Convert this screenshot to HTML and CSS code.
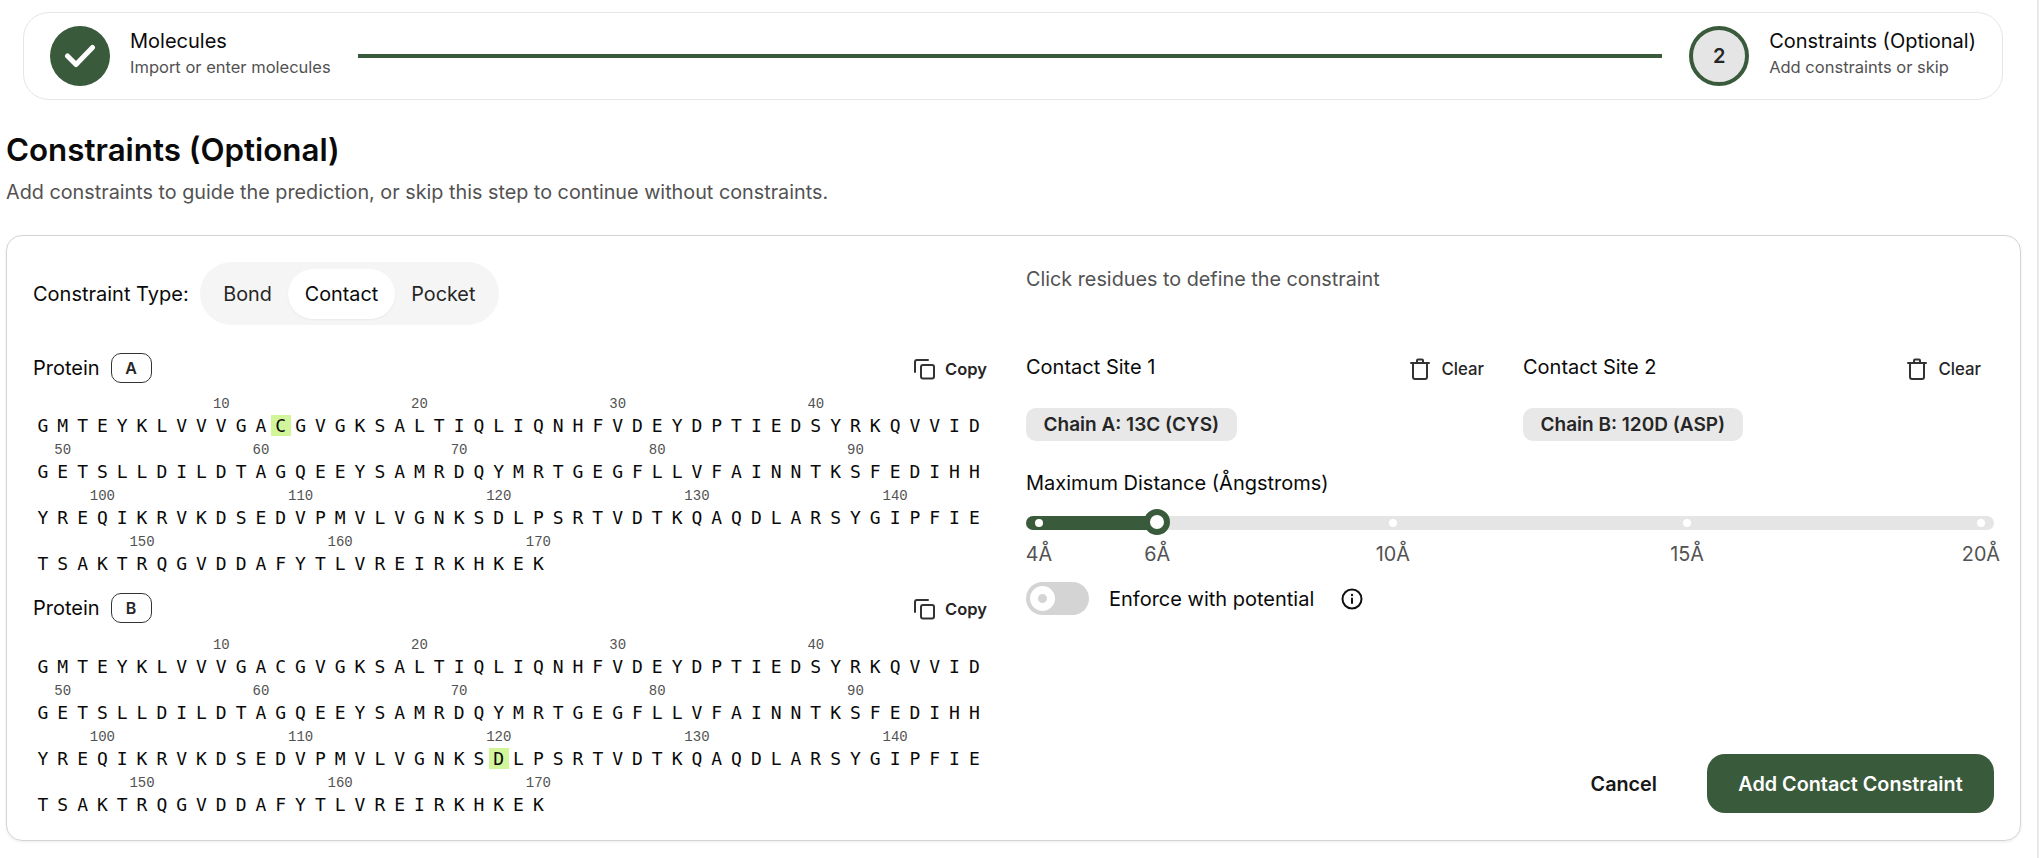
FILE: index.html
```html
<!DOCTYPE html>
<html lang="en">
<head>
  <meta charset="UTF-8">
  <title>Constraints (Optional)</title>
  <link rel="stylesheet" href="styles.css">
</head>
<body>
  <div class="page">
    <div class="stepper">
      <div class="step">
        <div class="step-circle done">
          <svg width="32" height="32" viewBox="0 0 32 32" fill="none" stroke="#fff" stroke-width="5" stroke-linecap="round" stroke-linejoin="round"><path d="M3.500 16L12 24.500L28.500 7.500"/></svg>
        </div>
        <div class="step-text">
          <div class="step-title">Molecules</div>
          <div class="step-sub">Import or enter molecules</div>
        </div>
      </div>
      <div class="step-line"></div>
      <div class="step">
        <div class="step-circle current">2</div>
        <div class="step-text">
          <div class="step-title">Constraints (Optional)</div>
          <div class="step-sub">Add constraints or skip</div>
        </div>
      </div>
    </div>

    <h1>Constraints (Optional)</h1>
    <p class="lead">Add constraints to guide the prediction, or skip this step to continue without constraints.</p>

    <div class="card">
      <div class="left">
        <div class="type-row">
          <span class="field-label">Constraint Type:</span>
          <div class="segment">
            <span class="segment-item">Bond</span>
            <span class="segment-item active">Contact</span>
            <span class="segment-item">Pocket</span>
          </div>
        </div>

        <div class="protein">
          <div class="protein-head">
            <span class="field-label">Protein</span>
            <span class="chain-badge">A</span>
            <span class="copy">
              <svg width="24" height="24" viewBox="0 0 24 24" fill="none" stroke="#333" stroke-width="2" stroke-linecap="round" stroke-linejoin="round"><rect x="9" y="8" width="13" height="13.500" rx="2"/><path d="M3 15V5a2 2 0 0 1 2-2h11"/></svg>
              Copy
            </span>
          </div>
          <div class="nums nums-1"><span>10</span><span>20</span><span>30</span><span>40</span></div>
          <div class="seq">GMTEYKLVVVGA<span class="hit">C</span>GVGKSALTIQLIQNHFVDEYDPTIEDSYRKQVVID</div>
          <div class="nums nums-2"><span>50</span><span>60</span><span>70</span><span>80</span><span>90</span></div>
          <div class="seq">GETSLLDILDTAGQEEYSAMRDQYMRTGEGFLLVFAINNTKSFEDIHH</div>
          <div class="nums nums-3"><span>100</span><span>110</span><span>120</span><span>130</span><span>140</span></div>
          <div class="seq">YREQIKRVKDSEDVPMVLVGNKSDLPSRTVDTKQAQDLARSYGIPFIE</div>
          <div class="nums nums-4"><span>150</span><span>160</span><span>170</span></div>
          <div class="seq">TSAKTRQGVDDAFYTLVREIRKHKEK</div>
        </div>

        <div class="protein">
          <div class="protein-head">
            <span class="field-label">Protein</span>
            <span class="chain-badge">B</span>
            <span class="copy">
              <svg width="24" height="24" viewBox="0 0 24 24" fill="none" stroke="#333" stroke-width="2" stroke-linecap="round" stroke-linejoin="round"><rect x="9" y="8" width="13" height="13.500" rx="2"/><path d="M3 15V5a2 2 0 0 1 2-2h11"/></svg>
              Copy
            </span>
          </div>
          <div class="nums nums-1"><span>10</span><span>20</span><span>30</span><span>40</span></div>
          <div class="seq">GMTEYKLVVVGACGVGKSALTIQLIQNHFVDEYDPTIEDSYRKQVVID</div>
          <div class="nums nums-2"><span>50</span><span>60</span><span>70</span><span>80</span><span>90</span></div>
          <div class="seq">GETSLLDILDTAGQEEYSAMRDQYMRTGEGFLLVFAINNTKSFEDIHH</div>
          <div class="nums nums-3"><span>100</span><span>110</span><span>120</span><span>130</span><span>140</span></div>
          <div class="seq">YREQIKRVKDSEDVPMVLVGNKS<span class="hit">D</span>LPSRTVDTKQAQDLARSYGIPFIE</div>
          <div class="nums nums-4"><span>150</span><span>160</span><span>170</span></div>
          <div class="seq">TSAKTRQGVDDAFYTLVREIRKHKEK</div>
        </div>
      </div>

      <div class="right">
        <p class="hint">Click residues to define the constraint</p>

        <div class="sites">
          <div class="site">
            <div class="site-head">
              <span class="field-label">Contact Site 1</span>
              <span class="clear">
                <svg width="24" height="24" viewBox="0 0 24 24" fill="none" stroke="#333" stroke-width="2" stroke-linecap="round" stroke-linejoin="round"><path d="M3 6h18M9 6V3.500a1 1 0 0 1 1-1h4a1 1 0 0 1 1 1V6M5 6v14a2 2 0 0 0 2 2h10a2 2 0 0 0 2-2V6"/></svg>
                Clear
              </span>
            </div>
            <span class="chip">Chain A: 13C (CYS)</span>
          </div>
          <div class="site">
            <div class="site-head">
              <span class="field-label">Contact Site 2</span>
              <span class="clear">
                <svg width="24" height="24" viewBox="0 0 24 24" fill="none" stroke="#333" stroke-width="2" stroke-linecap="round" stroke-linejoin="round"><path d="M3 6h18M9 6V3.500a1 1 0 0 1 1-1h4a1 1 0 0 1 1 1V6M5 6v14a2 2 0 0 0 2 2h10a2 2 0 0 0 2-2V6"/></svg>
                Clear
              </span>
            </div>
            <span class="chip">Chain B: 120D (ASP)</span>
          </div>
        </div>

        <div class="field-label distance-label">Maximum Distance (Ångstroms)</div>
        <div class="slider">
          <div class="track">
            <div class="range"></div>
            <span class="dot on" style="left: 1.35%"></span>
            <span class="dot" style="left: 37.9%"></span>
            <span class="dot" style="left: 68.3%"></span>
            <span class="dot" style="left: 98.65%"></span>
            <span class="thumb"></span>
          </div>
          <div class="marks">
            <span style="left: 1.35%">4Å</span>
            <span style="left: 13.55%">6Å</span>
            <span style="left: 37.9%">10Å</span>
            <span style="left: 68.3%">15Å</span>
            <span style="left: 98.65%">20Å</span>
          </div>
        </div>

        <div class="enforce">
          <span class="toggle"><span class="knob"></span></span>
          <span class="enforce-label">Enforce with potential</span>
          <svg width="24" height="24" viewBox="0 0 24 24" fill="none" stroke="#111" stroke-width="2" stroke-linecap="round"><circle cx="12" cy="12" r="9.500"/><path d="M12 11.500v4.500"/><path d="M12 8v.1" stroke-width="2.400"/></svg>
        </div>

        <div class="actions">
          <button type="button" class="btn-cancel">Cancel</button>
          <button type="button" class="btn-add">Add Contact Constraint</button>
        </div>
      </div>
    </div>
  </div>
</body>
</html>
```

FILE: styles.css
```css
* {
  box-sizing: border-box;
}

body {
  margin: 0;
  height: 858px;
  overflow: hidden;
  background-color: #fff;
  font-family: Inter, "Noto Sans", sans-serif;
  color: #0a0a0a;
  border-right: 2px solid #e8e8e8;
}

.page {
  padding: 12px 16px 0 6px;
}

/* stepper */
.stepper {
  display: flex;
  align-items: center;
  height: 88px;
  margin: 0 18px 0 17px;
  padding: 0 26px;
  border: 1px solid #e6e6e6;
  border-radius: 26px;
}

.step {
  display: flex;
  align-items: center;
  gap: 20px;
}

.step-text {
  margin-top: -6px;
}

.step-circle {
  width: 60px;
  height: 60px;
  border-radius: 50%;
  display: flex;
  align-items: center;
  justify-content: center;
  font-size: 20px;
  font-weight: 600;
  color: #262626;
}

.step-circle.done {
  background-color: #3a5a3c;
}

.step-circle.current {
  background-color: #e5e5e5;
  border: 4px solid #3a5a3c;
}

.step-title {
  font-size: 20px;
  font-weight: 400;
  line-height: 28px;
}

.step-sub {
  font-size: 16.500px;
  line-height: 24px;
  color: #525252;
}

.step-line {
  flex: 1;
  height: 4px;
  margin: 0 27px;
  background-color: #3a5a3c;
}

h1 {
  margin: 30px 0 0;
  font-size: 31.300px;
  line-height: 40px;
  font-weight: 600;
}

.lead {
  margin: 8px 0 0;
  font-size: 19.800px;
  line-height: 28px;
  color: #525252;
}

/* main card */
.card {
  display: flex;
  height: 606px;
  margin-top: 29px;
  padding: 26px 26px 27px 26px;
  border: 1px solid #d4d4d4;
  border-radius: 16px;
  box-shadow: 0 1px 3px rgba(0, 0, 0, 0.08);
}

.left {
  width: 954px;
  flex-shrink: 0;
}

.right {
  flex: 1;
  margin-left: 39px;
  display: flex;
  flex-direction: column;
}

.field-label {
  font-size: 20px;
  font-weight: 400;
  line-height: 28px;
}

.type-row {
  display: flex;
  align-items: center;
  gap: 11px;
}

.segment {
  display: flex;
  align-items: center;
  height: 63px;
  padding: 0 7px;
  border-radius: 32px;
  background-color: #f5f5f5;
  font-size: 19.800px;
}

.segment-item {
  padding: 0 16.500px;
  line-height: 50px;
  color: #262626;
}

.segment-item.active {
  background-color: #fff;
  border-radius: 25px;
  color: #0a0a0a;
  box-shadow: 0 1px 2px rgba(0, 0, 0, 0.05);
}

/* sequences */
.protein {
  margin-top: 28px;
}

.protein + .protein {
  margin-top: 15px;
}

.protein-head {
  display: flex;
  align-items: center;
  height: 30px;
  margin-bottom: 11px;
}

.protein + .protein .protein-head {
  margin-bottom: 12px;
}

.chain-badge {
  width: 41px;
  height: 30px;
  margin-left: 11px;
  border: 1px solid #333;
  border-radius: 10px;
  text-align: center;
  font-size: 16px;
  font-weight: 600;
  line-height: 28px;
  color: #262626;
}

.copy {
  margin-left: auto;
  display: flex;
  align-items: center;
  gap: 9px;
  margin-top: 2px;
  font-size: 16.500px;
  font-weight: 600;
  color: #262626;
}

.nums {
  display: flex;
  height: 18px;
  font-family: "Liberation Mono", monospace;
  font-size: 14px;
  line-height: 20px;
  color: #525252;
}

.nums span {
  flex: 0 0 198.200px;
  text-align: center;
}

/* the number sits over its residue, rows hold 48 residues */
.nums-1 { margin-left: 89.200px; }
.nums-2 { margin-left: -69.400px; }
.nums-3 { margin-left: -29.700px; }
.nums-4 { margin-left: 9.900px; }

.seq {
  height: 28px;
  padding-left: 4.500px;
  font-family: "DejaVu Sans Mono", monospace;
  font-size: 18px;
  line-height: 28px;
  letter-spacing: 8.980px;
  white-space: nowrap;
  color: #0a0a0a;
}

.hit {
  margin: 0 4.490px 0 -4.490px;
  padding-left: 4.490px;
  letter-spacing: 4.490px;
  background-color: #d3f59a;
}

/* right column */
.hint {
  margin: 3px 0 0;
  font-size: 19.800px;
  line-height: 28px;
  color: #525252;
}

.sites {
  display: flex;
  gap: 39px;
  margin-top: 59px;
  padding-right: 13px;
}

.site {
  flex: 1;
}

.site-head {
  display: flex;
  align-items: center;
  justify-content: space-between;
  height: 30px;
}

.clear {
  display: flex;
  align-items: center;
  gap: 9.500px;
  margin-top: 4px;
  font-size: 16.800px;
  font-weight: 500;
  color: #262626;
}

.chip {
  display: inline-block;
  margin-top: 26px;
  padding: 0 17.500px;
  height: 33px;
  border-radius: 10px;
  background-color: #e8e8e8;
  font-size: 19px;
  font-weight: 600;
  line-height: 33px;
  color: #262626;
}

.distance-label {
  margin-top: 28px;
}

.slider {
  margin-top: 19px;
}

.track {
  position: relative;
  height: 14px;
  border-radius: 7px;
  background-color: #e5e5e5;
}

.range {
  width: 13.550%;
  height: 14px;
  border-radius: 7px 0 0 7px;
  background-color: #3a5a3c;
}

.dot {
  position: absolute;
  top: 3px;
  width: 8px;
  height: 8px;
  margin-left: -4px;
  border-radius: 50%;
  background-color: #fff;
}

.thumb {
  position: absolute;
  left: 13.550%;
  top: -7px;
  width: 26px;
  height: 26px;
  margin-left: -13px;
  border: 6px solid #3a5a3c;
  border-radius: 50%;
  background-color: #fff;
}

.marks {
  position: relative;
  height: 28px;
  margin-top: 10px;
  font-size: 19.800px;
  line-height: 28px;
  color: #525252;
}

.marks span {
  position: absolute;
  transform: translateX(-50%);
}

.enforce {
  display: flex;
  align-items: center;
  height: 33px;
  margin-top: 14px;
}

.toggle {
  display: flex;
  align-items: center;
  width: 63px;
  height: 33px;
  padding-left: 4px;
  border-radius: 17px;
  background-color: #d4d4d4;
}

.knob {
  width: 25px;
  height: 25px;
  border: 8px solid #fff;
  border-radius: 50%;
  background-color: #d4d4d4;
}

.enforce-label {
  margin: 0 26px 0 20px;
  font-size: 20px;
  font-weight: 400;
}

.actions {
  margin-top: auto;
  display: flex;
  justify-content: flex-end;
  align-items: center;
  gap: 50px;
}

button {
  border: none;
  background: none;
  font-family: inherit;
  font-size: 19.800px;
  font-weight: 600;
}

.btn-cancel {
  padding: 0;
  color: #171717;
}

.btn-add {
  width: 287px;
  height: 59px;
  border-radius: 18px;
  background-color: #3a5a3c;
  color: #fff;
}
```
